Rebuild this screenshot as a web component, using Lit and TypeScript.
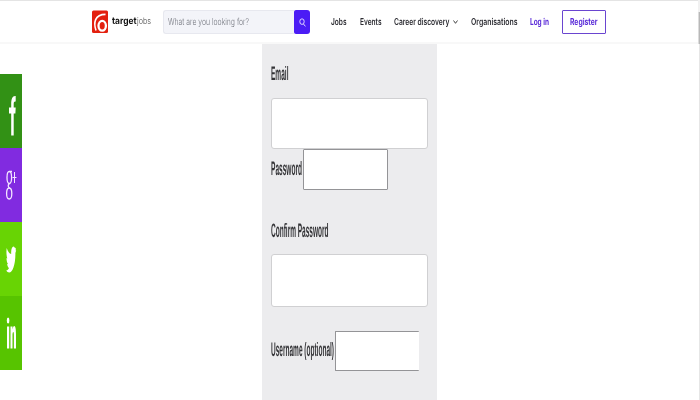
import { LitElement, html, css, svg } from "lit";
import { customElement, property } from "lit/decorators.js";

/** A line of text condensed or expanded to a fixed width. */
@customElement("fit-text")
class FitText extends LitElement {
  @property() text = "";
  @property({ type: Number }) width = 10;
  @property({ type: Number }) height = 12;
  @property({ type: Number }) base = 9;

  static styles = css`
    :host { display: block; flex: none; will-change: transform; }
    svg { display: block; overflow: visible; }
    text { fill: currentColor; white-space: pre; text-rendering: geometricPrecision; }
  `;

  render() {
    return html`<svg width=${this.width} height=${this.height}>
      ${svg`<text x="0" y=${this.base} textLength=${this.width} lengthAdjust="spacingAndGlyphs">${this.text}</text>`}
    </svg>`;
  }
}

@customElement("site-header")
class SiteHeader extends LitElement {
  static styles = css`
    :host {
      display: flex; box-sizing: border-box; height: 44px; padding: 9px 0 0 92px;
      background: #fff; border-top: 1px solid #e4e4e4; border-bottom: 2px solid #f8f8f8;
      font: 600 9.5px Inter, "Open Sans", sans-serif; color: #2c2c32;
    }
    .logo { display: block; width: 16px; height: 23px; }
    .brand { display: flex; gap: 1px; margin: 6px 0 0 3.5px; width: 51.5px; color: #111; }
    .bold { font-weight: 700; font-size: 9.5px; }
    .thin { font-weight: 300; font-size: 9px; color: #444; }
    .search {
      box-sizing: border-box; width: 131px; height: 24px; padding: 6px 0 0 3.5px;
      background: #f3f4f9; border: 1px solid #e7e8ef; border-right: 0; border-radius: 3px 0 0 3px;
      color: #73767e; font-weight: 300; font-size: 9.5px;
    }
    .go {
      width: 16px; height: 24px; background: #4b1cf5; border-radius: 2px 3px 3px 2px;
      display: flex; align-items: center; justify-content: center;
    }
    nav { display: flex; margin: 6px 0 0 21px; height: 12px; }
    .events { margin-left: 13px; }
    .career { margin-left: 13px; }
    .chev { margin: 3px 0 0 3px; }
    .orgs { margin-left: 13px; }
    .login { margin-left: 12.5px; color: #5a2bd8; font-weight: 700; }
    .register {
      box-sizing: border-box; width: 44.5px; height: 24px; margin-left: 13px;
      border: 1px solid #6a45d0; padding: 5px 0 0 7.5px; border-radius: 1px;
      color: #5a2bd8; font-weight: 700;
    }
  `;

  render() {
    return html`
      <svg class="logo" viewBox="0 0 16 23">
        <rect width="16" height="22.5" rx="1.5" fill="#e3200f" y=".5" />
        <ellipse cx="10.2" cy="15.8" rx="3.7" ry="4.9" fill="none" stroke="#fff" stroke-width="2.3" />
        <path d="M4 20.5C1.4 13 2.5 4.4 13.5 4.4" fill="none" stroke="#fff" stroke-width="1.6" />
      </svg>
      <div class="brand">
        <fit-text class="bold" text="target" width="24.5" base="8.3"></fit-text>
        <fit-text class="thin" text="jobs" width="14" base="8.3"></fit-text>
      </div>
      <div class="search"><fit-text text="What are you looking for?" width="81" base="8.3"></fit-text></div>
      <div class="go">
        <svg width="7" height="9" viewBox="0 0 7 9" fill="none" stroke="#eee8ff" stroke-width=".9">
          <ellipse cx="3" cy="3.6" rx="2.2" ry="2.8" /><path d="M4.5 6 6.4 8.4" />
        </svg>
      </div>
      <nav>
        <fit-text text="Jobs" width="15.5" base="8.5"></fit-text>
        <fit-text class="events" text="Events" width="21.5" base="8.5"></fit-text>
        <fit-text class="career" text="Career discovery" width="55.5" base="8.5"></fit-text>
        <svg class="chev" width="5" height="6" fill="none" stroke="#333" stroke-width=".9"><path d="M.5 1.5 2.5 4.3 4.5 1.5" /></svg>
        <fit-text class="orgs" text="Organisations" width="46.5" base="8.5"></fit-text>
        <fit-text class="login" text="Log in" width="19" base="9"></fit-text>
      </nav>
      <div class="register"><fit-text text="Register" width="27.5" base="8.8"></fit-text></div>
    `;
  }
}

@customElement("share-bar")
class ShareBar extends LitElement {
  static styles = css`
    :host { display: block; width: 22px; padding-top: 30px; }
    div { height: 74px; }
    svg { display: block; width: 22px; height: 74px; }
    .fb { background: #329115; }
    .gp { background: #812be0; }
    .tw { background: #68d404; }
    .li { background: #57c400; }
  `;

  render() {
    return html`
      <div class="fb"><svg><path fill="#fff" d="M11.2 61.5V39.5H9V33.5H11.2V30C11.2 24.5 12.7 21.5 15.7 22V27.5C14.2 27.3 13.7 28 13.7 30V33.5H15.7L15.4 39.5H13.7V61.5Z" /></svg></div>
      <div class="gp"><svg>
        <g fill="none" stroke="#f3e6ff" stroke-width="1.3">
          <ellipse cx="9.3" cy="29.5" rx="2.3" ry="6" />
          <ellipse cx="9.2" cy="45.5" rx="2.6" ry="5.5" />
          <path d="M9.5 23.5H12M9.3 35.5C7.6 37 8 39 9.8 40.5" />
          <path stroke-width="1" d="M12.5 29.5H16.5M14.5 24V35" />
        </g>
      </svg></div>
      <div class="tw"><svg><path fill="#fff" d="M6.7 26C8 30 9.3 31.5 11.2 32C10.9 27.5 12 24.5 13.5 24.5C14.3 24.5 14.8 25.5 15.2 26.5L16 25.5 15.6 28.5 16.2 28.2 15.4 31C15.5 43 12.5 50.5 9.2 50.5C8 50.5 7 49.5 6.2 48.5C7.5 48.5 8.3 47.5 9 46C8 45.5 7.4 44 7.2 42H8C7 41 6.5 38.5 6.5 36L7.3 36.5C6.4 34 6.2 29.5 6.7 26Z" /></svg></div>
      <div class="li"><svg fill="#fff">
        <ellipse cx="8.1" cy="24.5" rx="1.3" ry="3" />
        <path d="M7 30.5H9.2V52.5H7ZM10.5 30.5H12.5V33.5C13 31 13.6 30 14.2 30C15.5 30 16 33 16 38V52.5H13.9V39.5C13.9 37 13.7 36 13.3 36C12.8 36 12.5 37.5 12.5 40V52.5H10.5Z" />
      </svg></div>
    `;
  }
}

@customElement("signup-form")
class SignupForm extends LitElement {
  static styles = css`
    :host {
      display: block; box-sizing: border-box; width: 175px; height: 356px; padding: 20px 9px 0;
      background: #ececee; color: #333336; font: 700 19.5px "Liberation Sans", Arial, sans-serif;
    }
    .wide {
      box-sizing: border-box; height: 52px; width: 157px; background: #fff;
      border: 1px solid #d0d0d2; border-radius: 3px;
    }
    .first { margin-top: 10px; height: 51px; }
    .second { margin-top: 10px; height: 53px; }
    .row { display: flex; }
    .row.pw { height: 71px; }
    .row.user { margin-top: 24px; }
    .row fit-text { margin-top: 7px; }
    .small { box-sizing: border-box; background: #fff; border: 1px solid #949497; border-radius: 1px; }
    .pw .small { width: 85px; height: 41px; margin-left: 1px; }
    .user .small { width: 84px; height: 40px; margin-left: 1px; border-right: 0; }
  `;

  render() {
    return html`
      <fit-text text="Email" width="17.5" height="24" base="16"></fit-text>
      <div class="wide first"></div>
      <div class="row pw">
        <fit-text text="Password" width="31" height="24" base="19.4"></fit-text>
        <div class="small"></div>
      </div>
      <fit-text text="Confirm Password" width="57.5" height="24" base="17.4"></fit-text>
      <div class="wide second"></div>
      <div class="row user">
        <fit-text text="Username (optional)" width="63" height="24" base="18"></fit-text>
        <div class="small"></div>
      </div>
    `;
  }
}

@customElement("app-root")
class AppRoot extends LitElement {
  static styles = css`
    :host { display: flex; height: 400px; width: 700px; background: #fff; overflow: hidden; }
    .page { width: 698px; }
    .body { display: flex; gap: 240px; height: 356px; }
    .scroll { width: 2px; background: linear-gradient(to right, #fff 50%, #e6e6e6 50%); }
    .cap { height: 12px; background: #f1f1f1; }
    .thumb { height: 32px; background: linear-gradient(to right, #dcdcdc 50%, #b8b8b8 50%); }
  `;

  render() {
    return html`
      <div class="page">
        <site-header></site-header>
        <div class="body"><share-bar></share-bar><signup-form></signup-form></div>
      </div>
      <div class="scroll"><div class="cap"></div><div class="thumb"></div></div>
    `;
  }
}
